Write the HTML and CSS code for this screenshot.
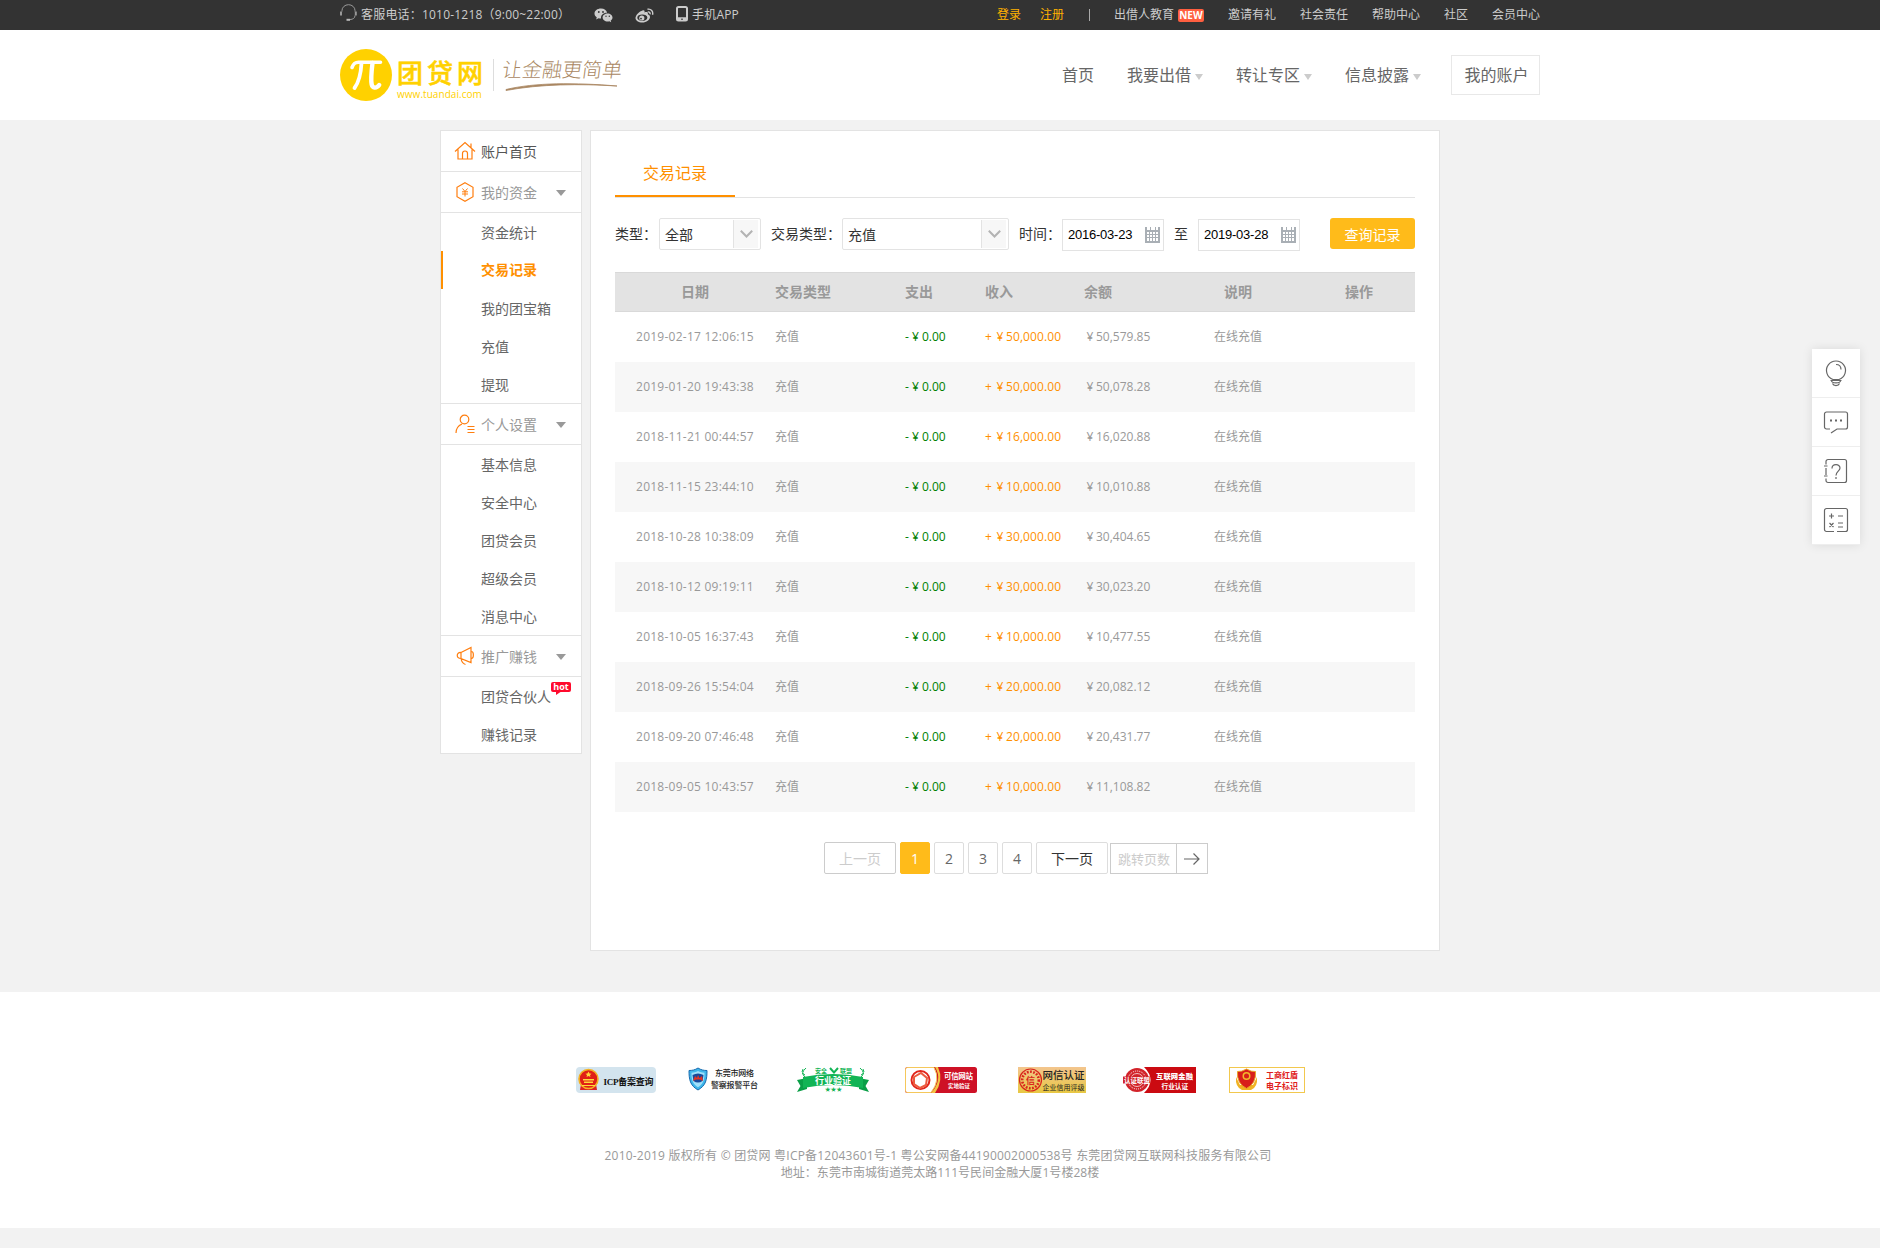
FILE: index.html
```html
<!DOCTYPE html>
<html lang="zh-CN">
<head>
<meta charset="utf-8">
<title>交易记录 - 团贷网</title>
<link rel="stylesheet" href="styles.css">
</head>
<body>
<div class="topbar">
  <div class="wrap topbar-in">
    <div class="top-left">
      <svg class="ic-head" width="17" height="18" viewBox="0 0 17 18" fill="none" stroke="#999"><path d="M2 7.500V6.500a6.500 5.800 0 0 1 13 0v1M15 11.500c0 2.500-2 4-5 4" stroke-width="1"/><path d="M1 7.500v4M15.800 7.500v4" stroke-width="2"/><path d="M6.500 15.800h3.500" stroke="#bbb" stroke-width="2"/></svg>
      <span class="phone">客服电话：1010-1218（9:00~22:00）</span>
      <svg class="ic-wechat" width="19" height="15" viewBox="0 0 19 15"><path fill="#ccc" d="M7 .5C3.300.5.500 2.800.500 5.600c0 1.600.9 2.900 2.300 3.900l-.7 2 2.400-1.200c.8.200 1.600.3 2.600.3-.6-3.300 2-5.900 6-5.900C12.600 2.300 10.200.5 7 .5z"/><path fill="#ccc" d="M18.500 9.400c0-2.200-2.200-4-4.900-4s-5 1.800-5 4 2.200 4 5 4c.6 0 1.200-.1 1.700-.2l1.900 1-.5-1.700c1.100-.7 1.800-1.800 1.800-3.100z"/><g fill="#333"><circle cx="4.800" cy="4" r=".9"/><circle cx="9" cy="4" r=".9"/><circle cx="12" cy="8.200" r=".7"/><circle cx="15.300" cy="8.200" r=".7"/></g></svg>
      <svg class="ic-weibo" width="19" height="15" viewBox="0 0 19 15" fill="none"><path fill="#ccc" d="M7.500 2.500c1.600-.6 2.500.2 2 2 2-.8 4-.5 3.300 1.700 1.300.5 2.200 1.300 2.200 2.700 0 2.800-3.500 5.600-7.700 5.600C3.500 14.500.500 12.700.500 10c0-2.800 4-6.700 7-7.500z"/><ellipse cx="7.300" cy="9.700" rx="5" ry="3.300" fill="#333"/><circle cx="6.800" cy="10" r="2.600" fill="#ccc"/><circle cx="6" cy="10.600" r=".9" fill="#333"/><path stroke="#ccc" stroke-width="1.400" d="M12.500 1.200c3.500-.7 6 2.200 5 5.600M12.800 3.900c1.600-.3 2.600.9 2.200 2.400"/></svg>
      <svg class="ic-mobile" width="12" height="16" viewBox="0 0 12 16"><rect x="1" y="1" width="10" height="13.500" rx="1.500" fill="none" stroke="#ccc" stroke-width="2"/><path d="M1 13h10" stroke="#ccc" stroke-width="3.500"/><path d="M5 13.200h2" stroke="#333"/></svg>
      <span class="app">手机APP</span>
    </div>
    <div class="top-right">
      <a class="gold">登录</a><a class="gold reg">注册</a><i class="bar"></i>
      <a>出借人教育</a><b class="new">NEW</b><a class="invite">邀请有礼</a><a>社会责任</a><a>帮助中心</a><a>社区</a><a>会员中心</a>
    </div>
  </div>
</div>
<header class="header">
  <div class="wrap header-in">
    <div class="logo">
      <svg width="52" height="52" viewBox="0 0 52 52"><circle cx="26" cy="26" r="26" fill="#ffd100"/><path fill="none" stroke="#fff" stroke-linecap="round" stroke-linejoin="round" stroke-width="3.600" d="M12 18.500c1.500-4 3-5.300 6.500-5.300H40.500"/><path fill="none" stroke="#fff" stroke-width="3.800" stroke-linecap="round" d="M21.500 14c-.6 11-2.500 19-7 25"/><path fill="none" stroke="#fff" stroke-width="4.400" stroke-linecap="round" d="M32.500 14c-1.200 10-1.800 17-.8 21.500.8 3.500 4.500 4.500 7.500.5"/></svg>
      <div class="logo-text"><div class="logo-cn">团贷网</div><div class="logo-url">www.tuandai.com</div></div>
      <div class="slogan"><span>让金融更简单</span>
        <svg width="114" height="8" viewBox="0 0 114 8"><path d="M1 6.500C30-.5 70-.5 112 3 75 .7 35 1 1 7.500z" fill="#a98762" stroke="#a98762" stroke-width=".8"/></svg>
      </div>
    </div>
    <nav class="nav">
      <a>首页</a><a class="sub">我要出借</a><a class="sub">转让专区</a><a class="sub">信息披露</a><a class="account">我的账户</a>
    </nav>
  </div>
</header>

<div class="page">
  <aside class="side">
    <div class="side-head dark"><svg width="22" height="20" viewBox="0 0 22 20" fill="none" stroke="#ff7e0f" stroke-width="1.200"><path d="M1 10.500L11 1.500l10 9M4 8.500v9.500h14V8.500M17 6.500V2.500"/><path d="M8.500 18v-5.500a2.500 2.500 0 0 1 5 0V18"/></svg><span>账户首页</span></div>
    <div class="side-head"><svg width="22" height="20" viewBox="0 0 22 20" fill="none" stroke="#ff7e0f" stroke-width="1.200"><path d="M11 .8l8 4.500v9.400l-8 4.500-8-4.500V5.300z"/><path d="M8.500 6.500l2.500 3 2.500-3M8 9.800h6M8 12h6M11 9.500v5" stroke-width="1"/></svg><span>我的资金</span><i class="tri"></i></div>
    <ul class="side-list"><li>资金统计</li><li class="on">交易记录</li><li>我的团宝箱</li><li>充值</li><li>提现</li></ul>
    <div class="side-head"><svg width="22" height="20" viewBox="0 0 22 20" fill="none" stroke="#ff7e0f" stroke-width="1.200"><circle cx="10.500" cy="5.500" r="4.300"/><path d="M2 19c0-4.500 2.500-7.500 6-9M13.500 12.500h7M13.500 15.500h7M13.500 18.500h7"/></svg><span>个人设置</span><i class="tri"></i></div>
    <ul class="side-list"><li>基本信息</li><li>安全中心</li><li>团贷会员</li><li>超级会员</li><li>消息中心</li></ul>
    <div class="side-head"><svg width="22" height="20" viewBox="0 0 22 20" fill="none" stroke="#ff7e0f" stroke-width="1.200"><path d="M7 6.500l10-5v15l-10-4zM7 6.500c-5-.5-5 6 0 6M7 12.500c.5 3 1.500 5 4.500 6M17.500 5.500c2.500 0 2.500 7 0 7"/></svg><span>推广赚钱</span><i class="tri"></i></div>
    <ul class="side-list"><li class="hot-item">团贷合伙人<b class="hot">hot</b></li><li>赚钱记录</li></ul>
  </aside>

  <main class="main">
    <div class="tabs"><a class="tab">交易记录</a></div>
    <div class="filter">
      <label>类型：</label>
      <div class="select s1"><span>全部</span><i><svg width="13" height="8" viewBox="0 0 13 8"><path d="M.8.800l5.700 5.700L12.200.800" fill="none" stroke="#b3b3b3" stroke-width="2"/></svg></i></div>
      <label class="l2">交易类型：</label>
      <div class="select s2"><span>充值</span><i><svg width="13" height="8" viewBox="0 0 13 8"><path d="M.8.800l5.700 5.700L12.200.800" fill="none" stroke="#b3b3b3" stroke-width="2"/></svg></i></div>
      <label class="l3">时间：</label>
      <div class="date"><span>2016-03-23</span><svg width="15" height="16" viewBox="0 0 15 16" shape-rendering="crispEdges"><path fill="#a9afb5" d="M0 0h2v3h3V0h1v3h4V0h1v3h2V0h2v16H0z"/><path fill="#fff" d="M2 5h2v2H2zM5 5h2v2H5zM8 5h2v2H8zM11 5h2v2h-2zM2 8h2v2H2zM5 8h2v2H5zM8 8h2v2H8zM11 8h2v2h-2zM2 11h2v3H2zM5 11h2v3H5zM8 11h2v3H8zM11 11h2v3h-2z"/></svg></div>
      <label class="to">至</label>
      <div class="date"><span>2019-03-28</span><svg width="15" height="16" viewBox="0 0 15 16" shape-rendering="crispEdges"><path fill="#a9afb5" d="M0 0h2v3h3V0h1v3h4V0h1v3h2V0h2v16H0z"/><path fill="#fff" d="M2 5h2v2H2zM5 5h2v2H5zM8 5h2v2H8zM11 5h2v2h-2zM2 8h2v2H2zM5 8h2v2H5zM8 8h2v2H8zM11 8h2v2h-2zM2 11h2v3H2zM5 11h2v3H5zM8 11h2v3H8zM11 11h2v3h-2z"/></svg></div>
      <a class="query">查询记录</a>
    </div>
    <table class="records">
      <colgroup><col class="c1"><col class="c2"><col class="c3"><col class="c4"><col class="c5"><col class="c6"><col class="c7"></colgroup>
      <thead><tr><th class="mid">日期</th><th>交易类型</th><th>支出</th><th>收入</th><th>余额</th><th class="mid">说明</th><th class="mid">操作</th></tr></thead>
      <tbody>
        <tr><td class="mid time">2019-02-17 12:06:15</td><td>充值</td><td class="out">-<i>¥</i>0.00</td><td class="in">+<i>¥</i>50,000.00</td><td><i>¥</i>50,579.85</td><td class="mid">在线充值</td><td></td></tr>
        <tr><td class="mid time">2019-01-20 19:43:38</td><td>充值</td><td class="out">-<i>¥</i>0.00</td><td class="in">+<i>¥</i>50,000.00</td><td><i>¥</i>50,078.28</td><td class="mid">在线充值</td><td></td></tr>
        <tr><td class="mid time">2018-11-21 00:44:57</td><td>充值</td><td class="out">-<i>¥</i>0.00</td><td class="in">+<i>¥</i>16,000.00</td><td><i>¥</i>16,020.88</td><td class="mid">在线充值</td><td></td></tr>
        <tr><td class="mid time">2018-11-15 23:44:10</td><td>充值</td><td class="out">-<i>¥</i>0.00</td><td class="in">+<i>¥</i>10,000.00</td><td><i>¥</i>10,010.88</td><td class="mid">在线充值</td><td></td></tr>
        <tr><td class="mid time">2018-10-28 10:38:09</td><td>充值</td><td class="out">-<i>¥</i>0.00</td><td class="in">+<i>¥</i>30,000.00</td><td><i>¥</i>30,404.65</td><td class="mid">在线充值</td><td></td></tr>
        <tr><td class="mid time">2018-10-12 09:19:11</td><td>充值</td><td class="out">-<i>¥</i>0.00</td><td class="in">+<i>¥</i>30,000.00</td><td><i>¥</i>30,023.20</td><td class="mid">在线充值</td><td></td></tr>
        <tr><td class="mid time">2018-10-05 16:37:43</td><td>充值</td><td class="out">-<i>¥</i>0.00</td><td class="in">+<i>¥</i>10,000.00</td><td><i>¥</i>10,477.55</td><td class="mid">在线充值</td><td></td></tr>
        <tr><td class="mid time">2018-09-26 15:54:04</td><td>充值</td><td class="out">-<i>¥</i>0.00</td><td class="in">+<i>¥</i>20,000.00</td><td><i>¥</i>20,082.12</td><td class="mid">在线充值</td><td></td></tr>
        <tr><td class="mid time">2018-09-20 07:46:48</td><td>充值</td><td class="out">-<i>¥</i>0.00</td><td class="in">+<i>¥</i>20,000.00</td><td><i>¥</i>20,431.77</td><td class="mid">在线充值</td><td></td></tr>
        <tr><td class="mid time">2018-09-05 10:43:57</td><td>充值</td><td class="out">-<i>¥</i>0.00</td><td class="in">+<i>¥</i>10,000.00</td><td><i>¥</i>11,108.82</td><td class="mid">在线充值</td><td></td></tr>
      </tbody>
    </table>
    <div class="pager">
      <a class="prev">上一页</a><a class="num cur">1</a><a class="num">2</a><a class="num">3</a><a class="num">4</a><a class="next">下一页</a>
      <div class="jump"><span>跳转页数</span><i><svg width="16" height="12" viewBox="0 0 16 12" fill="none" stroke="#666" stroke-width="1.200"><path d="M0 6h15M9.500.500L15 6l-5.500 5.500"/></svg></i></div>
    </div>
  </main>
</div>

<footer class="footer">
  <div class="badges">
    <svg class="b1" width="80" height="26" viewBox="0 0 80 26"><rect width="80" height="26" rx="4" fill="#d3e4ee"/><path d="M5 17l-1 6h17l-1-6z" fill="#d22"/><circle cx="12.500" cy="12" r="9.500" fill="#e01f16" stroke="#f4b223" stroke-width="1.600"/><path d="M12.500 4.500l1 2 2 .2-1.500 1.400.4 2-1.900-1-1.900 1 .4-2L9.500 6.700l2-.2zM7 12h11v1.500H7zM8 14.500h9V16H8zM6 18h13v1H6z" fill="#ffd83a"/><text x="27.500" y="17.500" font-size="9" font-weight="700" fill="#111" textLength="50"><tspan class="serif">ICP</tspan>备案查询</text></svg>
    <svg class="b2" width="71" height="26" viewBox="0 0 71 26"><path d="M10 1c3 2 6 2.500 9 2.500 0 9-1 15-9 19.500C2 18.500 1 12.500 1 3.500 4 3.500 7 3 10 1z" fill="#3db6ea" stroke="#176bb0"/><path d="M10 4c2 1.300 4 1.700 6.500 1.700 0 7-1 11-6.500 14.500C4.500 16.700 3.500 12.700 3.500 5.700 6 5.700 8 5.300 10 4z" fill="#9fe0fa"/><path d="M4.500 8q5.500-3 11 0l-1 6q-4.500 3-9 0z" fill="#174a9c"/><path d="M5 14l2-5 2 2 1-3 1.500 3L14 9l1 5-3-1.500h-4z" fill="#e53323"/><text x="27" y="9" font-size="8" font-weight="500" fill="#222" textLength="39">东莞市网络</text><text x="23" y="21" font-size="8" font-weight="500" fill="#222" textLength="47">警察报警平台</text></svg>
    <svg class="b3" width="72" height="26" viewBox="0 0 72 26"><path d="M0 13l10-2v11l-10 3 3.500-6zM72 13l-10-2v11l10 3-3.500-6z" fill="#0a9f47"/><path d="M6 10q30-6 60 0v11q-30-6-60 0z" fill="#12b455"/><path d="M9 1q-6 5-1 9M63 1q6 5 1 9M6 2l-1 3M5 6l3 2M66 2l1 3M67 6l-3 2" fill="none" stroke="#12b455"/><text x="18" y="5.800" font-size="6" font-weight="700" fill="#12b455">安全</text><path d="M33 1l4 4.500 4-4.500" stroke="#12b455" stroke-width="2" fill="none"/><text x="43" y="5.800" font-size="6" font-weight="700" fill="#12b455">联盟</text><text x="18" y="16.500" font-size="9" font-weight="700" fill="#fff">行业验证</text><text x="28" y="24" font-size="5.500" fill="#12b455" textLength="17">★★★</text></svg>
    <svg class="b4" width="72" height="26" viewBox="0 0 72 26"><rect width="72" height="26" rx="2.500" fill="#ce1126"/><path d="M2.500.500H29q7 12.500-3 25H2.500a2 2 0 0 1-2-2v-21a2 2 0 0 1 2-2z" fill="#fff" stroke="#f5c85b"/><path d="M30 0q8 13-4 26h4q9-13 3-26z" fill="#f3c443"/><circle cx="15.500" cy="13" r="9" fill="none" stroke="#e1251b" stroke-width="2"/><path d="M9 10l7-4 6 5-1 7-6 3-6-4z" fill="none" stroke="#ec5b3f" stroke-width="2"/><text x="39" y="12" font-size="7.500" font-weight="700" fill="#fff" textLength="29">可信网站</text><text x="43" y="21" font-size="5.500" font-weight="700" fill="#fff">实地验证</text></svg>
    <svg class="b5" width="68" height="26" viewBox="0 0 68 26"><defs><linearGradient id="gold" x2="0" y2="1"><stop stop-color="#f3c58e"/><stop offset="1" stop-color="#e8c843"/></linearGradient></defs><rect width="68" height="26" fill="url(#gold)"/><circle cx="12.500" cy="13" r="11" fill="none" stroke="#d9261c" stroke-width="1.200"/><circle cx="12.500" cy="13" r="8.300" fill="none" stroke="#d9261c" stroke-width="2.600" stroke-dasharray="1.800 1.400"/><text x="8" y="16.500" font-size="9" font-weight="700" fill="#d9261c">信</text><text x="24.500" y="12" font-size="10.500" font-weight="500" fill="#222" textLength="42">网信认证</text><text x="24.500" y="22.500" font-size="7" fill="#222" textLength="42">企业信用评级</text></svg>
    <svg class="b6" width="73" height="26" viewBox="0 0 73 26"><path d="M21 0h52v26H21q13-13 0-26z" fill="#cb0a11"/><circle cx="14" cy="13" r="12" fill="#d2232a"/><circle cx="14" cy="13" r="9" fill="none" stroke="#fff" stroke-width="1" stroke-dasharray="1 1"/><circle cx="14" cy="13" r="6.500" fill="none" stroke="#fff" stroke-width=".7"/><rect x="0" y="9.500" width="27" height="7" fill="#d2232a"/><text x="1" y="15.800" font-size="6.500" font-weight="700" fill="#fff">认证联盟</text><text x="33" y="12" font-size="7.300" font-weight="900" fill="#fff" textLength="37">互联网金融</text><text x="38.500" y="22" font-size="6.700" font-weight="700" fill="#fff">行业认证</text></svg>
    <svg class="b7" width="76" height="26" viewBox="0 0 76 26"><rect x=".5" y=".5" width="75" height="25" fill="#fff" stroke="#f2c84e"/><path d="M7 10q-1 10 6 13h9q7-3 6-13l-4 8H11z" fill="#f0b323"/><path d="M17.500 2q5 3 9 2.500 1 12-9 17-10-5-9-17 4 .5 9-2.500z" fill="#d81f1a" stroke="#e9a327"/><circle cx="17.500" cy="9" r="4" fill="#f1b92c"/><circle cx="17.500" cy="9" r="2.500" fill="#d81f1a"/><text class="serif" x="37" y="11" font-size="8" font-weight="700" fill="#e0201b">工商红盾</text><text class="serif" x="37" y="22" font-size="8" font-weight="700" fill="#e0201b">电子标识</text></svg>
  </div>
  <p class="copy c-a">2010-2019 版权所有 © 团贷网 粤ICP备12043601号-1 粤公安网备44190002000538号 东莞团贷网互联网科技服务有限公司</p>
  <p class="copy c-b">地址：东莞市南城街道莞太路111号民间金融大厦1号楼28楼</p>
</footer>

<div class="tools">
  <a><svg width="26" height="28" viewBox="0 0 26 28" fill="none" stroke="#666" stroke-width="1.200"><path d="M10 20.500a9.500 9.500 0 1 1 6 0zM13 5.500c3 0 5 2 5 5M7.500 21.500h11M8.500 22c.5 2.500 8.500 2.500 9 0M9.500 24.500c1 2.700 6 2.700 7 0"/></svg></a>
  <a><svg width="26" height="28" viewBox="0 0 26 28" fill="none" stroke="#666" stroke-width="1.200"><path d="M7 21H3.500a2 2 0 0 1-2-2V6a2 2 0 0 1 2-2h19a2 2 0 0 1 2 2v13a2 2 0 0 1-2 2H14l-6 4"/><path d="M7 12.500h2M12 12.500h2M17 12.500h2" stroke-width="2"/></svg></a>
  <a><svg width="26" height="28" viewBox="0 0 26 28" fill="none" stroke="#666" stroke-width="1.200"><path d="M3 7.500V4.500a2 2 0 0 1 2-2h16.500a2 2 0 0 1 2 2v19a2 2 0 0 1-2 2H5a2 2 0 0 1-2-2v-2M3 11v7M1 9h3.500M1 19h3.500"/><path d="M9 11.500c0-5 8-5 8-.5 0 3-4 3.500-4 7.500M13 20v2"/></svg></a>
  <a><svg width="26" height="28" viewBox="0 0 26 28" fill="none" stroke="#666" stroke-width="1.200"><path d="M11 25.500H3.500a2 2 0 0 1-2-2V4.500a2 2 0 0 1 2-2h19a2 2 0 0 1 2 2v19a2 2 0 0 1-2 2H14"/><path d="M6 10h5M8.500 7.500v5M15 10h5M6.500 17l4 4M10.500 17l-4 4M15 17h5M15 21h5"/></svg></a>
</div>
</body>
</html>
```
FILE: styles.css
```css
* { box-sizing: border-box; }
body { margin: 0; background: #f2f2f2; color: #333; font: 12px/18px "Open Sans", "Noto Sans CJK SC", sans-serif; min-height: 1248px; }
ul, p { margin: 0; padding: 0; list-style: none; }
i { font-style: normal; }
svg { display: block; flex: none; }
svg text { font-family: "Noto Sans CJK SC", sans-serif; }
svg .serif { font-family: "Liberation Serif", "Noto Sans CJK SC", serif; }
.wrap { width: 1200px; margin: 0 auto; }

.topbar { height: 30px; background: #333; color: #ccc; }
.topbar-in, .top-left, .top-right { display: flex; align-items: center; height: 30px; white-space: nowrap; }
.topbar-in { justify-content: space-between; }
.ic-head { margin-top: -4px; }
.phone { margin-left: 4px; width: 233px; letter-spacing: .2px; }
.ic-wechat { width: 19px; }
.ic-weibo { margin-left: 22px; }
.ic-mobile { margin: -3px 4px 0 22px; }
.app { letter-spacing: .2px; }
.top-right a { margin-left: 24px; }
.top-right .gold { color: #ffb100; }
.top-right .reg { margin-left: 19px; }
.bar { width: 1px; height: 12px; background: #aaa; margin-left: 25px; }
.new { width: 26px; height: 13px; margin-left: 4px; border-radius: 2px; background: #ff5f40; color: #fff; font-size: 10px; line-height: 13px; text-align: center; }
.top-right .invite { margin-left: 24px; }

.header { height: 90px; background: #fff; }
.header-in { display: flex; justify-content: space-between; align-items: center; height: 90px; }
.logo { display: flex; align-items: center; color: #ffd100; }
.logo-text { width: 97px; height: 32px; margin-left: 5px; border-right: 1px solid #ddd; }
.logo-cn { font-size: 26px; line-height: 28px; font-weight: 500; letter-spacing: 4px; white-space: nowrap; -webkit-text-stroke: .5px #ffd100; }
.logo-url { padding-top: 2px; font-size: 10px; line-height: 10px; letter-spacing: .05px; white-space: nowrap; }
.slogan { margin-left: 8px; color: #a98762; width: 122px; }
.slogan span { display: block; height: 24px; font-size: 20px; line-height: 22px; font-weight: 300; white-space: nowrap; transform: skewX(-8deg); }
.slogan svg { margin-left: 3px; }
.nav { display: flex; align-items: center; color: #666; font-size: 16px; line-height: 24px; }
.nav .sub { display: flex; align-items: center; margin-left: 33px; }
.nav .sub::after { content: ""; margin: 3px 0 0 4px; border: 4px solid transparent; border-top: 6px solid #ccc; border-bottom: 0; }
.nav .account { width: 89px; height: 40px; margin-left: 30px; padding-left: 2px; border: 1px solid #e8e8e8; line-height: 39px; text-align: center; }

.page { display: flex; align-items: flex-start; width: 1000px; margin: 10px auto 0; gap: 8px; }
.side { width: 142px; border: 1px solid #e3e3e3; background: #fff; font-size: 14px; color: #666; }
.side-head { display: flex; align-items: center; height: 41px; padding: 0 15px 0 13px; border-bottom: 1px solid #e3e3e3; color: #999; }
.side-list + .side-head { border-top: 1px solid #e3e3e3; height: 42px; }
.side-head.dark { color: #555; }
.side-head span { margin-left: 5px; padding-top: 1px; line-height: 22px; }
.tri { margin: 2px 0 0 auto; border: 5px solid transparent; border-top: 6px solid #999; border-bottom: 0; }
.side-list li { height: 38px; padding: 0 0 0 40px; line-height: 39px; white-space: nowrap; }
.side-list .on { border-left: 2px solid #ff9000; padding: 0 0 0 38px; color: #ff9000; font-weight: 700; line-height: 37px; }
.hot-item { position: relative; }
.hot { position: absolute; left: 110px; top: 5px; width: 20px; height: 10px; border-radius: 2px; background: #ff0a2d; color: #fff; font-size: 9px; line-height: 9px; text-align: center; }
.hot::after { content: ""; position: absolute; left: 5px; top: 9px; border-top: 4px solid #ff0a2d; border-right: 6px solid transparent; }

.main { width: 850px; height: 821px; padding: 24px; border: 1px solid #e3e3e3; background: #fff; }
.tabs { display: flex; height: 43px; border-bottom: 1px solid #e3e3e3; }
.tab { width: 120px; height: 42px; border-bottom: 2px solid #ff9000; color: #ff9000; font-size: 16px; line-height: 37px; text-align: center; }
.filter { display: flex; align-items: flex-start; height: 74px; padding-top: 20px; font-size: 14px; }
.filter label { width: 44px; line-height: 31px; white-space: nowrap; }
.filter .l2 { width: 71px; margin-left: 10px; }
.filter .l3 { width: 43px; margin-left: 10px; }
.filter .to { width: 14px; margin: 0 10px; }
.select { display: flex; height: 32px; border: 1px solid #e3e3e3; border-radius: 2px; line-height: 32px; }
.select span { flex: 1; padding-left: 5px; }
.select i { display: flex; align-items: center; justify-content: center; width: 25px; margin: 1px 2px 1px 0; border-left: 1px solid #e3e3e3; background: #f7f7f7; }
.s1 { width: 102px; }
.s2 { width: 167px; }
.date { display: flex; align-items: center; width: 102px; height: 32px; margin-top: 1px; padding: 0 3px 0 5px; border: 1px solid #e3e3e3; color: #000; font: 13px/30px "Liberation Sans", sans-serif; letter-spacing: -.23px; }
.date svg { margin-left: auto; }
.query { width: 85px; height: 31px; margin-left: auto; border-radius: 3px; background: #ffbb1a; color: #fff; line-height: 33px; text-align: center; }

.records { width: 800px; table-layout: fixed; border-collapse: collapse; color: #999; }
.c1 { width: 160px; } .c2 { width: 130px; } .c3 { width: 80px; } .c4 { width: 99px; } .c5 { width: 89px; } .c6 { width: 130px; } .c7 { width: 112px; }
.records th, .records td { padding: 0; text-align: left; white-space: nowrap; }
.records .mid { text-align: center; }
.records th { height: 40px; background: #e3e3e3; font-size: 14px; box-shadow: inset 0 1px #d9d9d9, inset 0 -1px #d9d9d9; }
.records td { height: 50px; }
.records td i { display: inline-block; width: 12px; text-align: center; }
.records .time { letter-spacing: .25px; }
.records .out { color: #008000; }
.records .out i { width: 13px; }
.records .in { color: #ff9000; letter-spacing: .1px; }
.records .in i { width: 12px; margin-left: 2px; }
.records tbody tr:nth-child(even) { background: #f7f7f7; }

.pager { display: flex; align-items: flex-start; margin: 30px 0 0 209px; gap: 4px; font-size: 14px; }
.pager a { height: 32px; border: 1px solid #ddd; border-radius: 2px; color: #666; line-height: 32px; text-align: center; }
.pager .prev, .pager .next { width: 72px; }
.pager .prev { border-color: #ccc; color: #ccc; }
.pager .next { color: #333; }
.pager .num { width: 30px; }
.pager .cur { border-color: #ffbb1a; background: #ffbb1a; color: #fff; }
.jump { display: flex; width: 98px; height: 31px; margin: 1px 0 0 -2px; border: 1px solid #ccc; color: #ccc; font-size: 13px; line-height: 30px; }
.jump span { width: 66px; padding-left: 7px; border-right: 1px solid #ccc; white-space: nowrap; }
.jump i { flex: 1; display: flex; align-items: center; justify-content: center; }

.footer { height: 236px; margin-top: 41px; padding-top: 75px; background: #fff; color: #999; text-align: center; }
.badges { display: flex; width: 729px; margin: 0 auto; }
.b2 { margin-left: 32px; } .b3 { margin-left: 38px; } .b4 { margin-left: 36px; } .b5 { margin-left: 41px; } .b6 { margin-left: 37px; } .b7 { margin-left: 33px; }
.copy { line-height: 17px; white-space: nowrap; }
.c-a { margin: 54px 4px 0 0; letter-spacing: .21px; }
.c-b { letter-spacing: .05px; }

.tools { position: fixed; left: 1812px; top: 349px; width: 48px; background: #fff; box-shadow: 0 0 10px rgba(0,0,0,.1); }
.tools a { display: flex; align-items: center; justify-content: center; height: 49px; border-bottom: 1px solid #eee; }
```
